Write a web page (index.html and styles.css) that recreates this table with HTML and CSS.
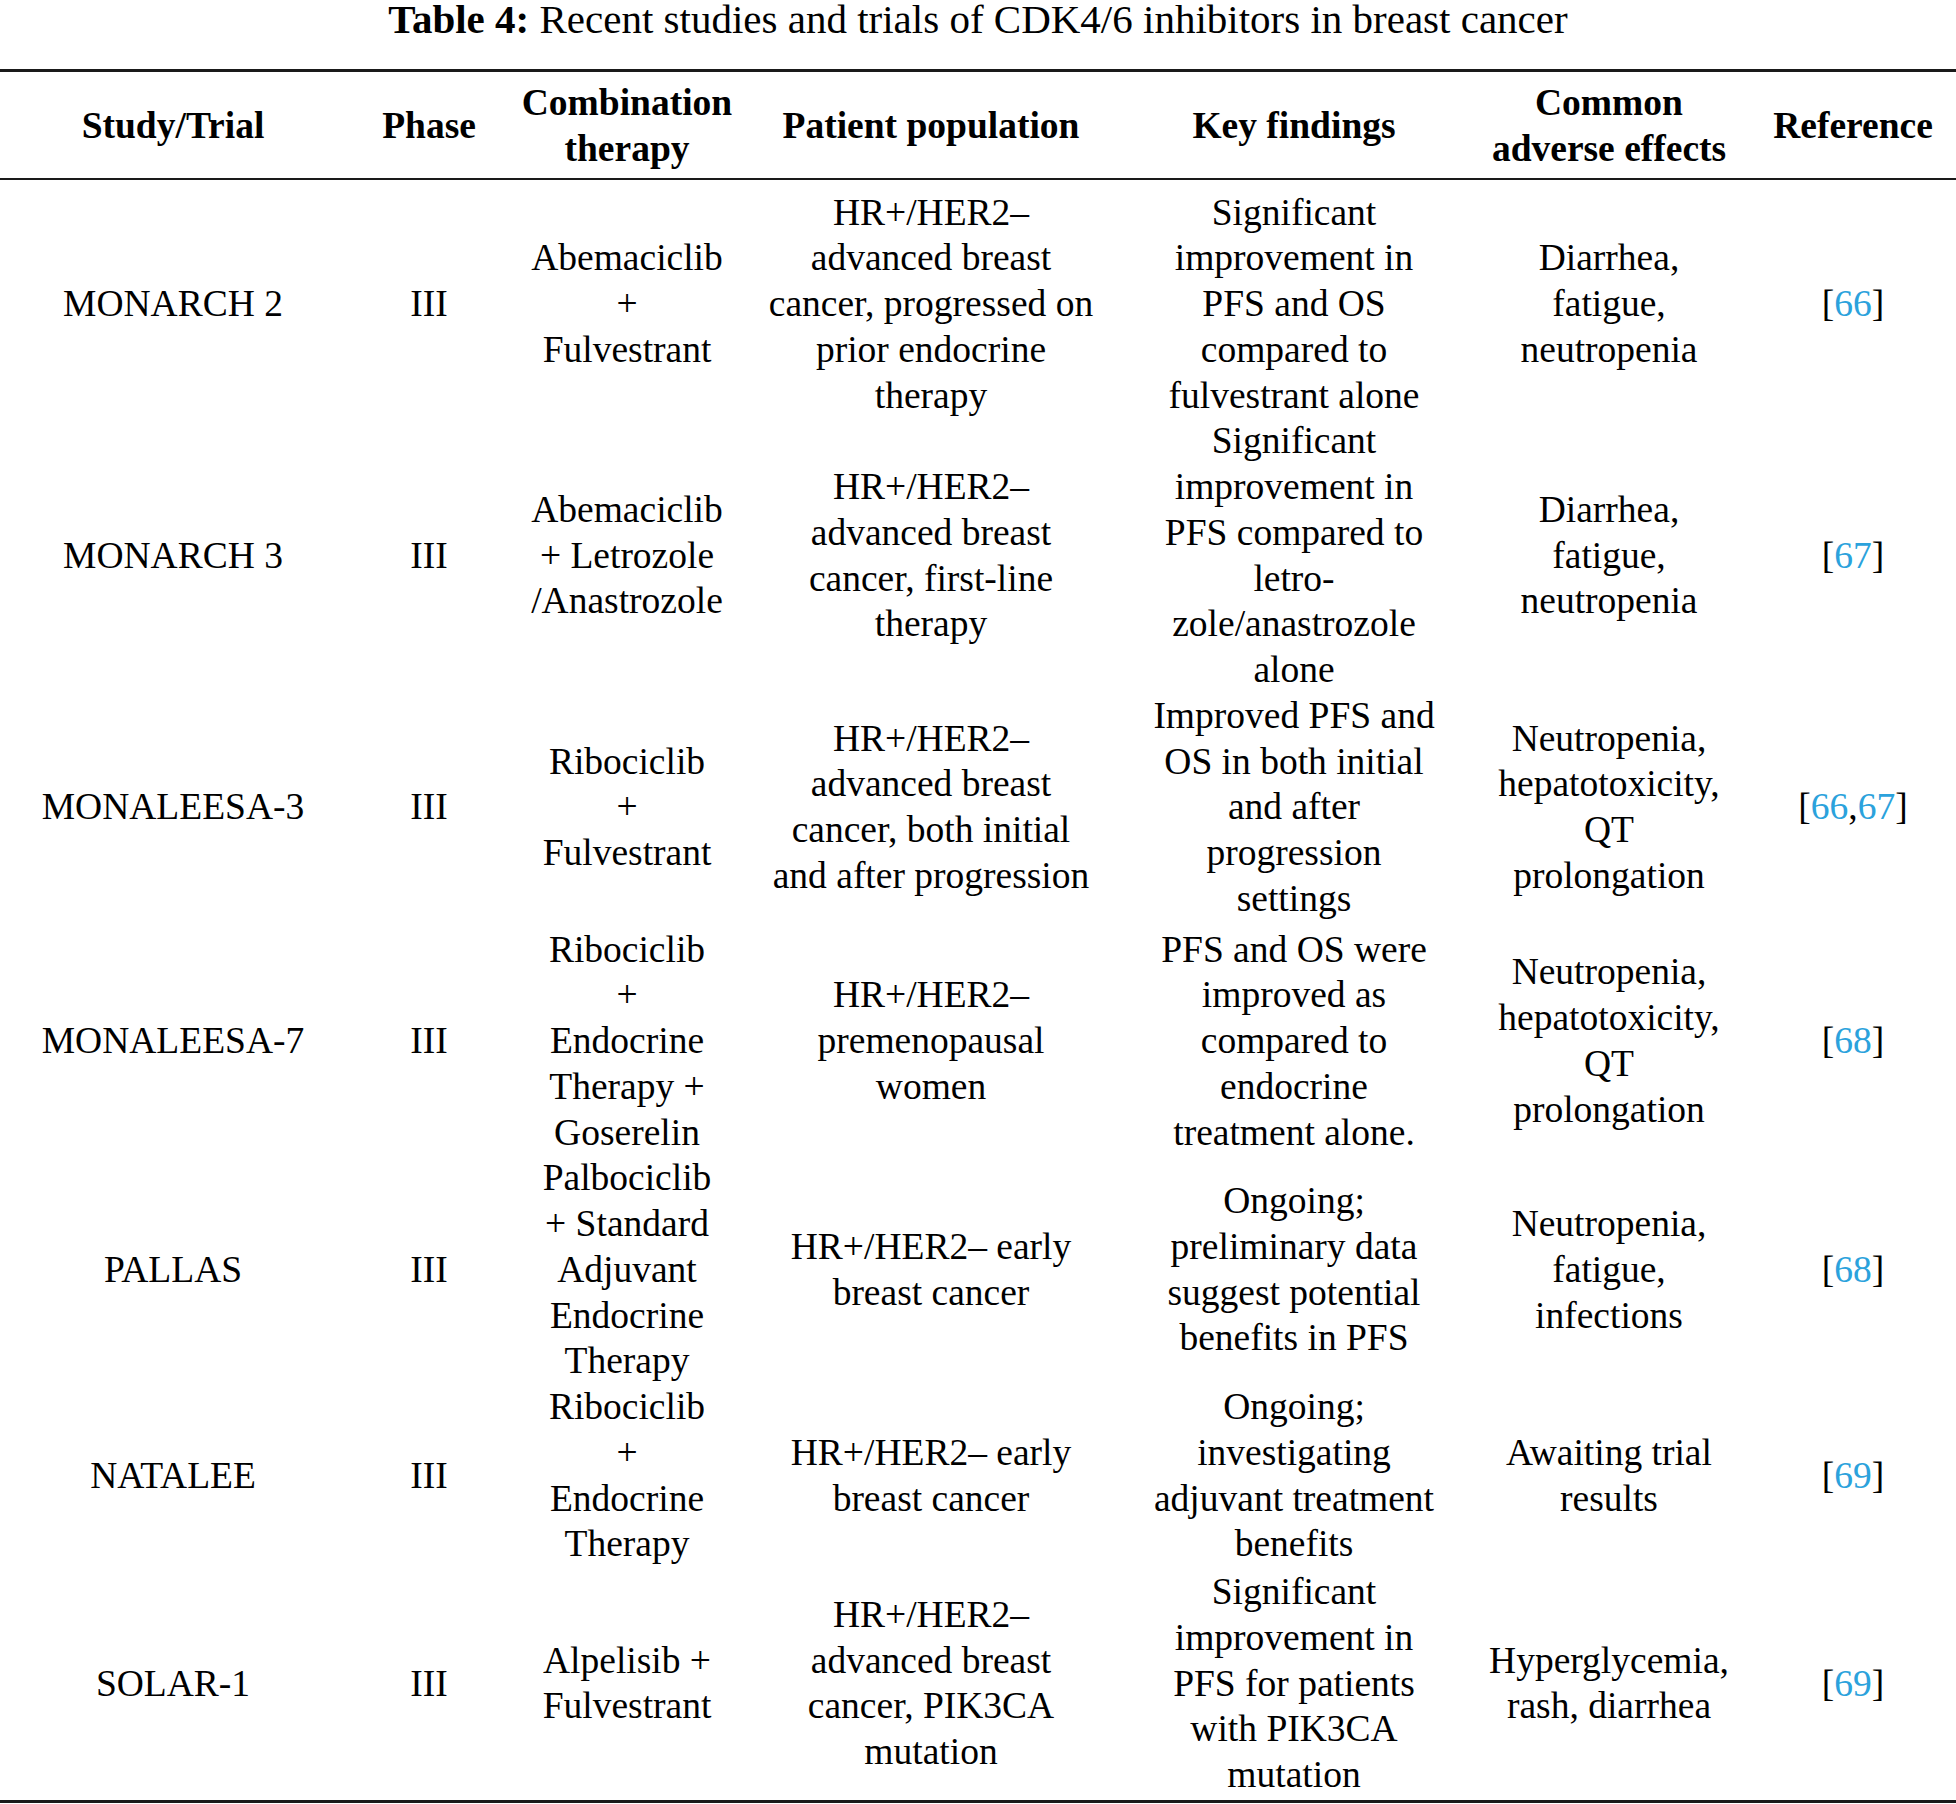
FILE: index.html
```html
<!DOCTYPE html>
<html lang="en">
<head>
<meta charset="utf-8">
<title>Table 4: Recent studies and trials of CDK4/6 inhibitors in breast cancer</title>
<link rel="stylesheet" href="styles.css">
</head>
<body>
<table class="data">
  <caption class="title"><b>Table 4:</b> Recent studies and trials of CDK4/6 inhibitors in breast cancer</caption>
  <colgroup>
    <col class="c-study"><col class="c-phase"><col class="c-combo"><col class="c-pop"><col class="c-key"><col class="c-ae"><col class="c-ref">
  </colgroup>
  <thead>
    <tr>
      <th>Study/Trial</th>
      <th>Phase</th>
      <th>Combination<br>therapy</th>
      <th>Patient population</th>
      <th>Key findings</th>
      <th>Common<br>adverse effects</th>
      <th>Reference</th>
    </tr>
  </thead>
  <tbody>
    <tr class="first">
      <td>MONARCH 2</td>
      <td>III</td>
      <td>Abemaciclib<br>+<br>Fulvestrant</td>
      <td>HR+/HER2&ndash;<br>advanced breast<br>cancer, progressed on<br>prior endocrine<br>therapy</td>
      <td>Significant<br>improvement in<br>PFS and OS<br>compared to<br>fulvestrant alone</td>
      <td>Diarrhea,<br>fatigue,<br>neutropenia</td>
      <td>[<a href="#r66">66</a>]</td>
    </tr>
    <tr>
      <td>MONARCH 3</td>
      <td>III</td>
      <td>Abemaciclib<br>+ Letrozole<br>/Anastrozole</td>
      <td>HR+/HER2&ndash;<br>advanced breast<br>cancer, first-line<br>therapy</td>
      <td>Significant<br>improvement in<br>PFS compared to<br>letro-<br>zole/anastrozole<br>alone</td>
      <td>Diarrhea,<br>fatigue,<br>neutropenia</td>
      <td>[<a href="#r67">67</a>]</td>
    </tr>
    <tr>
      <td>MONALEESA-3</td>
      <td>III</td>
      <td>Ribociclib<br>+<br>Fulvestrant</td>
      <td>HR+/HER2&ndash;<br>advanced breast<br>cancer, both initial<br>and after progression</td>
      <td>Improved PFS and<br>OS in both initial<br>and after<br>progression<br>settings</td>
      <td>Neutropenia,<br>hepatotoxicity,<br>QT<br>prolongation</td>
      <td>[<a href="#r66">66</a>,<a href="#r67">67</a>]</td>
    </tr>
    <tr class="spaced">
      <td>MONALEESA-7</td>
      <td>III</td>
      <td>Ribociclib<br>+<br>Endocrine<br>Therapy +<br>Goserelin</td>
      <td>HR+/HER2&ndash;<br>premenopausal<br>women</td>
      <td>PFS and OS were<br>improved as<br>compared to<br>endocrine<br>treatment alone.</td>
      <td>Neutropenia,<br>hepatotoxicity,<br>QT<br>prolongation</td>
      <td>[<a href="#r68">68</a>]</td>
    </tr>
    <tr>
      <td>PALLAS</td>
      <td>III</td>
      <td>Palbociclib<br>+ Standard<br>Adjuvant<br>Endocrine<br>Therapy</td>
      <td>HR+/HER2&ndash; early<br>breast cancer</td>
      <td>Ongoing;<br>preliminary data<br>suggest potential<br>benefits in PFS</td>
      <td>Neutropenia,<br>fatigue,<br>infections</td>
      <td>[<a href="#r68">68</a>]</td>
    </tr>
    <tr>
      <td>NATALEE</td>
      <td>III</td>
      <td>Ribociclib<br>+<br>Endocrine<br>Therapy</td>
      <td>HR+/HER2&ndash; early<br>breast cancer</td>
      <td>Ongoing;<br>investigating<br>adjuvant treatment<br>benefits</td>
      <td>Awaiting trial<br>results</td>
      <td>[<a href="#r69">69</a>]</td>
    </tr>
    <tr class="last">
      <td>SOLAR-1</td>
      <td>III</td>
      <td>Alpelisib +<br>Fulvestrant</td>
      <td>HR+/HER2&ndash;<br>advanced breast<br>cancer, PIK3CA<br>mutation</td>
      <td>Significant<br>improvement in<br>PFS for patients<br>with PIK3CA<br>mutation</td>
      <td>Hyperglycemia,<br>rash, diarrhea</td>
      <td>[<a href="#r69">69</a>]</td>
    </tr>
  </tbody>
</table>
</body>
</html>
```

FILE: styles.css
```css
html, body {
  margin: 0;
  padding: 0;
  background: #ffffff;
}

body {
  font-family: "Liberation Serif", "Times New Roman", serif;
  font-size: 37.5px;
  color: #000000;
}

.data {
  width: 1956px;
  table-layout: fixed;
  border-collapse: collapse;
  border-spacing: 0;
}

.title {
  caption-side: top;
  text-align: center;
  font-size: 41px;
  line-height: 38px;
  padding: 0 0 31px;
  white-space: nowrap;
}

.title b {
  font-weight: bold;
}

.c-study { width: 346px; }
.c-phase { width: 166px; }
.c-combo { width: 230px; }
.c-pop   { width: 378px; }
.c-key   { width: 348px; }
.c-ae    { width: 282px; }
.c-ref   { width: 206px; }

.data th,
.data td {
  text-align: center;
  vertical-align: middle;
  line-height: 45.75px;
  padding: 0;
  white-space: nowrap;
}

.data th {
  font-weight: bold;
  padding: 8px 0 6px;
  border-top: 3px solid #1a1a1a;
  border-bottom: 2px solid #1a1a1a;
}

.data tr.first td {
  padding-top: 10px;
}

.data tr.spaced td {
  padding-top: 5px;
}

.data tr.last td {
  padding-top: 2px;
  padding-bottom: 2px;
  border-bottom: 3px solid #1a1a1a;
}

.data a {
  color: #2ba2dc;
  text-decoration: none;
}
```
